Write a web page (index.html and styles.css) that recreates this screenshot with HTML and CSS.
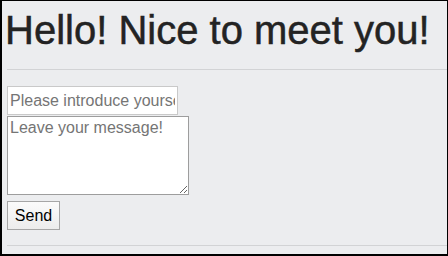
FILE: index.html
```html
<!DOCTYPE html>
<html>
<head>
<meta charset="utf-8">
<link rel="stylesheet" href="styles.css">
</head>
<body>
<div class="frame">
  <h1 class="title">Hello! Nice to meet you!</h1>
  <hr class="rule">
  <form class="form">
    <input class="name" type="text" placeholder="Please introduce yourself">
    <textarea class="message" placeholder="Leave your message!"></textarea>
    <button class="send" type="button">Send</button>
  </form>
  <hr class="rule">
</div>
</body>
</html>
```
FILE: styles.css
```css
html, body {
  margin: 0;
  padding: 0;
}
.frame {
  box-sizing: border-box;
  width: 448px;
  height: 256px;
  overflow: hidden;
  background: #ecedef;
  border-style: solid;
  border-color: #000;
  border-width: 1px 1px 2px 2px;
  padding: 0 0 0 5px;
  font-family: "Liberation Sans", Arial, sans-serif;
}
.title {
  margin: 7px 0 0 -2px;
  font-size: 40px;
  line-height: 44px;
  font-weight: normal;
  color: #232323;
  -webkit-text-stroke: 0.5px #232323;
}
.rule {
  margin: 17px 0 0 0;
  border: 0;
  border-top: 1px solid #d2d3d5;
  height: 0;
}
.form {
  display: flex;
  flex-direction: column;
  align-items: flex-start;
  margin-top: 16px;
}
.form + .rule {
  margin-top: 15px;
}
.name {
  box-sizing: border-box;
  width: 171px;
  height: 29px;
  margin: 0;
  padding: 0 2px;
  border: 1px solid #c9c9c9;
  background: #fff;
  font-family: inherit;
  font-size: 16px;
  color: #222;
  outline: none;
}
.message {
  box-sizing: border-box;
  width: 182px;
  height: 79px;
  margin: 1px 0 0 0;
  padding: 2px 2px;
  border: 1px solid #9d9d9d;
  background: #fff;
  font-family: inherit;
  font-size: 16px;
  color: #222;
  outline: none;
}
.name::placeholder,
.message::placeholder {
  color: #757575;
}
.send {
  box-sizing: border-box;
  width: 53px;
  height: 29px;
  margin: 6px 0 0 0;
  padding: 0;
  border: 1px solid #a6a6a6;
  border-radius: 0;
  background: linear-gradient(#fbfbfb, #ececec);
  font-family: inherit;
  font-size: 16px;
  color: #000;
}
```
